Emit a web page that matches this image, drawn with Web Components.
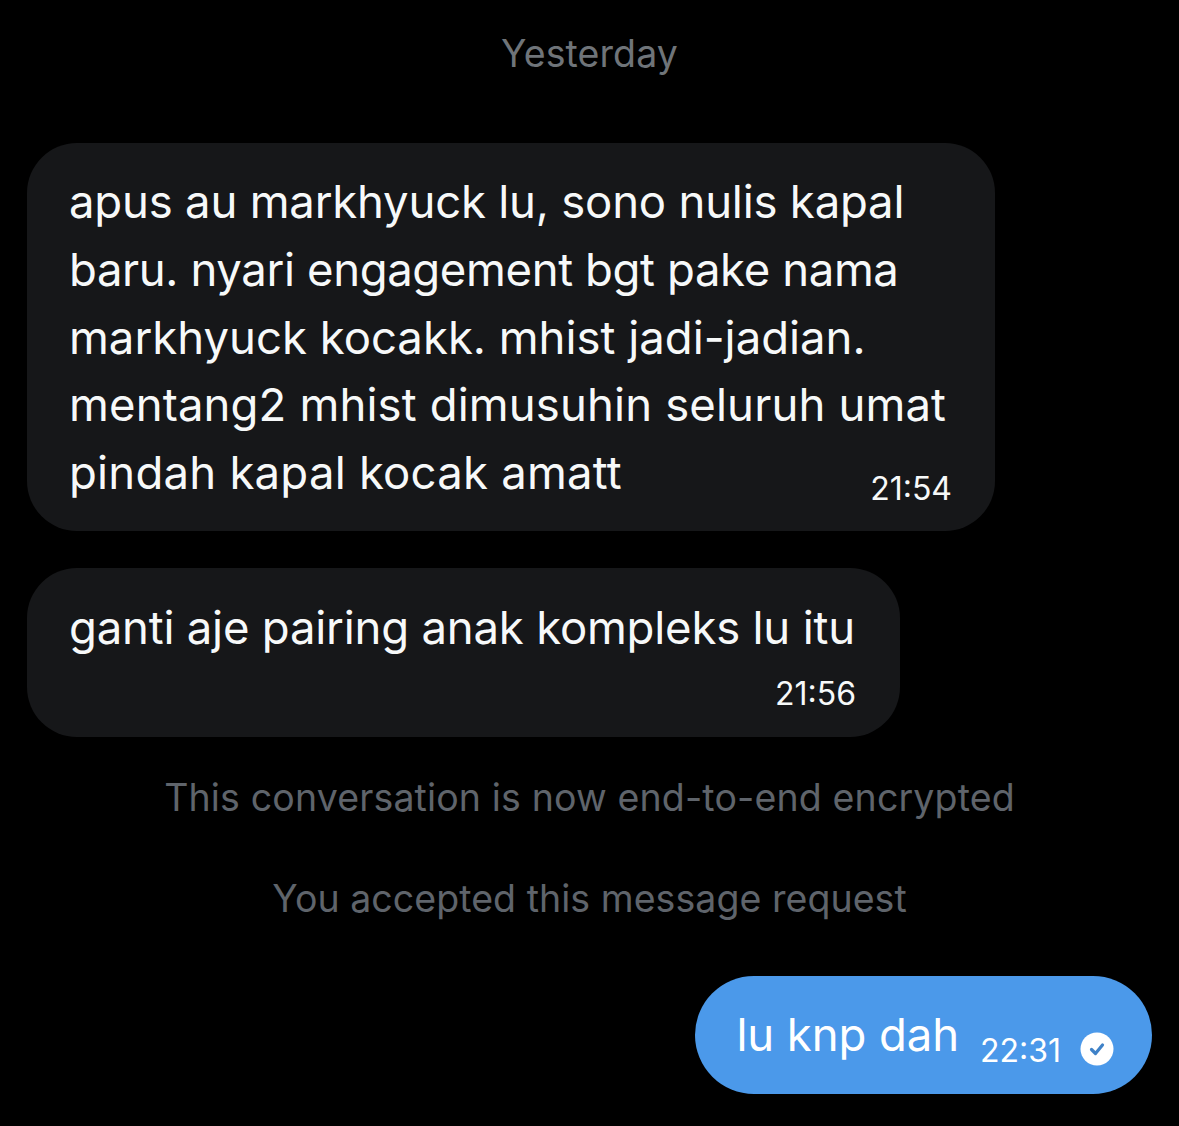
<!DOCTYPE html>
<html><head><meta charset="utf-8"><style>
html,body{margin:0;background:#000;}
body{width:1179px;height:1126px;overflow:hidden;font-family:Inter,"Liberation Sans",sans-serif;}
</style></head><body>
<chat-thread>
<chat-note kind="date">Yesterday</chat-note>
<chat-bubble time="21:54" style="margin-top:67px;width:968px"><chat-line style="--ls:-.21px">apus au markhyuck lu, sono nulis kapal</chat-line><chat-line style="--ls:-.38px">baru. nyari engagement bgt pake nama</chat-line><chat-line style="--ls:0px">markhyuck kocakk. mhist jadi-jadian.</chat-line><chat-line style="--ls:.13px">mentang2 mhist dimusuhin seluruh umat</chat-line><chat-line style="--ls:.22px">pindah kapal kocak amatt</chat-line></chat-bubble>
<chat-bubble time="21:56" stack style="margin-top:37px;width:873px"><chat-line style="--ls:-.21px">ganti aje pairing anak kompleks lu itu</chat-line></chat-bubble>
<chat-note style="margin-top:39px;letter-spacing:.15px">This conversation is now end-to-end encrypted</chat-note>
<chat-note style="margin-top:57px;letter-spacing:.05px">You accepted this message request</chat-note>
<chat-sent time="22:31" style="margin-top:55px">lu knp dah</chat-sent>
</chat-thread>
<script>
function def(name, html){
  customElements.define(name, class extends HTMLElement{
    connectedCallback(){
      if(this.shadowRoot) return;
      const r=this.attachShadow({mode:'open'});
      r.innerHTML=html;
      const t=r.querySelector('.time');
      if(t) t.textContent=this.getAttribute('time')||'';
    }
  });
}
const F='font-family:Inter,"Liberation Sans",sans-serif;';
def('chat-thread',`<style>:host{display:flex;flex-direction:column;padding:0 27px;box-sizing:border-box;width:1179px;height:1126px;}</style><slot></slot>`);
def('chat-note',`<style>:host{display:block;text-align:center;${F}font-size:37.5px;line-height:44px;color:#5f646b;letter-spacing:.18px;white-space:nowrap;}
:host([kind=date]){color:#6f7479;margin-top:32px;letter-spacing:.1px}</style><slot></slot>`);
def('chat-line',`<style>:host{display:block;white-space:nowrap;letter-spacing:var(--ls,0);}</style><slot></slot>`);
def('chat-bubble',`<style>:host{display:block;box-sizing:border-box;background:#161719;border-radius:50px;padding:25px 44px 22px 42px;color:#f7f9f9;${F}font-size:45.5px;line-height:67.8px;position:relative;}
:host([stack]){padding-top:26px;padding-bottom:23px}
.time{font-size:32px;line-height:40px;letter-spacing:0;text-align:right;display:block;margin-top:-38px;margin-right:-1px}
:host([stack]) .time{margin-top:12px;margin-right:0}
</style><slot></slot><span class="time"></span>`);
def('chat-sent',`<style>:host{display:flex;align-self:flex-end;align-items:center;box-sizing:border-box;height:118px;background:#4b99ea;border-radius:59px;padding:0 38px 0 41px;color:#fff;${F}font-size:45.5px;letter-spacing:-.1px;}
.time{font-size:32px;margin-left:21px;margin-top:32px;letter-spacing:0}
svg{margin-left:19px;margin-top:28px;width:34px;height:34px}
</style><slot></slot><span class="time"></span><svg viewBox="0 0 34 34"><circle cx="17" cy="17" r="16.5" fill="#fff"/><path d="M11.5 17.5l4 4 7-8.5" fill="none" stroke="#3f82c8" stroke-width="3.2" stroke-linecap="round" stroke-linejoin="round"/></svg>`);
</script>
</body></html>
